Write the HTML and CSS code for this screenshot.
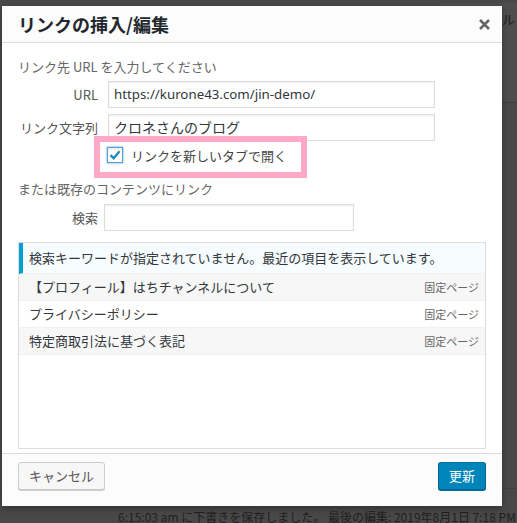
FILE: index.html
```html
<!DOCTYPE html>
<html lang="ja">
<head>
<meta charset="utf-8">
<title>リンクの挿入/編集</title>
<link rel="stylesheet" href="styles.css">
</head>
<body>
<div class="backdrop">
  <div class="side-box"><span class="side-text">キャンセル</span></div>
  <div class="spacer"></div>
  <div class="status-bar">6:15:03 am に下書きを保存しました。 最後の編集: 2019年8月1日 7:18 PM</div>
</div>

<div class="dialog">
  <div class="dialog-header">
    <span class="dialog-title">リンクの挿入/編集</span>
    <span class="close-btn">
      <svg width="11" height="11" viewBox="0 0 11 11"><path d="M1 1 L10 10 M10 1 L1 10" stroke="#666" stroke-width="2.6"/></svg>
    </span>
  </div>

  <div class="dialog-body">
    <p class="howto">リンク先 URL を入力してください</p>
    <div class="field-row">
      <label class="field-label">URL</label>
      <div class="text-input wide url">https://kurone43.com/jin-demo/</div>
    </div>
    <div class="field-row second">
      <label class="field-label">リンク文字列</label>
      <div class="text-input wide">クロネさんのブログ</div>
    </div>
    <div class="check-row">
      <span class="checkbox">
        <svg width="14" height="14" viewBox="0 0 14 14"><path d="M2.5 7.2 L5.6 10.2 L11.6 3.2" fill="none" stroke="#1e8cbe" stroke-width="2.3"/></svg>
      </span>
      <span class="check-label">リンクを新しいタブで開く</span>
    </div>
    <p class="howto existing">または既存のコンテンツにリンク</p>
    <div class="field-row search">
      <label class="field-label">検索</label>
      <div class="text-input narrow"></div>
    </div>

    <div class="results">
      <div class="query-notice">検索キーワードが指定されていません。最近の項目を表示しています。</div>
      <ul class="result-list">
        <li class="alternate"><span class="item-title">【プロフィール】はちチャンネルについて</span><span class="item-info">固定ページ</span></li>
        <li><span class="item-title">プライバシーポリシー</span><span class="item-info">固定ページ</span></li>
        <li class="alternate"><span class="item-title">特定商取引法に基づく表記</span><span class="item-info">固定ページ</span></li>
      </ul>
    </div>
  </div>

  <div class="dialog-footer">
    <span class="button cancel">キャンセル</span>
    <span class="button primary">更新</span>
  </div>

  <div class="highlight"></div>
</div>
</body>
</html>
```

FILE: styles.css
```css
html, body {
  margin: 0;
  padding: 0;
}

body {
  width: 517px;
  height: 523px;
  overflow: hidden;
  background: #484848;
  font-family: "Noto Sans", "Noto Sans CJK JP", sans-serif;
  font-size: 13px;
  position: relative;
}

.backdrop {
  height: 523px;
  display: flex;
  flex-direction: column;
}

.side-box {
  margin: 3px 0 0 440px;
  height: 100px;
  background: #4d4d4d;
  border-bottom: 1px solid #3f3f3f;
  text-align: right;
  padding-right: 2px;
  font-family: "Noto Sans CJK JP", sans-serif;
  color: #1c1c1c;
  line-height: 22px;
  padding-top: 5px;
  box-sizing: border-box;
  overflow: hidden;
  white-space: nowrap;
}

.spacer {
  flex: 1;
}

.status-bar {
  height: 35px;
  border-top: 1px solid #3f3f3f;
  padding: 19px 0 0 118px;
  box-sizing: border-box;
  color: #1f1f1f;
  line-height: 18px;
  font-size: 12px;
  white-space: nowrap;
  overflow: hidden;
  font-family: "Noto Sans CJK JP", sans-serif;
}

.dialog {
  position: absolute;
  left: 2px;
  top: 6px;
  width: 500px;
  height: 500px;
  background: #fff;
  box-shadow: 0 3px 6px rgba(0, 0, 0, 0.3);
  display: flex;
  flex-direction: column;
}

.dialog-header {
  height: 36px;
  line-height: 36px;
  padding: 0 36px 0 16px;
  background: #fcfcfc;
  border-bottom: 1px solid #ddd;
  position: relative;
}

.dialog-title {
  font-family: "Noto Sans CJK JP", sans-serif;
  font-size: 18px;
  font-weight: 700;
  color: #23282d;
}

.close-btn {
  position: absolute;
  right: 12px;
  top: 13px;
  width: 11px;
  height: 11px;
  display: block;
}

.close-btn svg {
  display: block;
}

.dialog-body {
  flex: 1;
  padding: 0 16px;
}

.howto {
  margin: 15px 0 0;
  line-height: 18px;
  color: #666;
  font-family: "Noto Sans CJK JP", sans-serif;
}

.howto.existing {
  margin-top: 16px;
}

.field-row {
  display: flex;
  align-items: center;
  gap: 10px;
  margin-top: 5px;
}

.field-row.second {
  margin-top: 6px;
}

.field-row.search {
  margin-top: 6px;
  gap: 6px;
}

.field-label {
  width: 80px;
  text-align: right;
  color: #555;
  font-family: "Noto Sans CJK JP", sans-serif;
  font-size: 13px;
}

.text-input {
  height: 27px;
  box-sizing: border-box;
  border: 1px solid #ddd;
  box-shadow: inset 0 1px 2px rgba(0, 0, 0, 0.07);
  padding: 0 5px;
  line-height: 25px;
  font-size: 14px;
  color: #32373c;
  background: #fff;
  white-space: nowrap;
  overflow: hidden;
}

.text-input.url {
  font-size: 13.3px;
}

.text-input.wide {
  width: 327px;
}

.text-input.narrow {
  width: 250px;
}

.check-row {
  display: flex;
  align-items: center;
  height: 18px;
  margin: 5px 0 0 89px;
  gap: 8px;
}

.checkbox {
  width: 16px;
  height: 16px;
  box-sizing: border-box;
  border: 1px solid #5b9dd9;
  box-shadow: 0 0 2px rgba(30, 140, 190, 0.8), inset 0 1px 2px rgba(0, 0, 0, 0.1);
  background: #fff;
  display: flex;
  align-items: center;
  justify-content: center;
}

.checkbox svg {
  display: block;
}

.check-label {
  font-family: "Noto Sans CJK JP", sans-serif;
  color: #444;
  font-size: 13px;
}

.results {
  margin-top: 11px;
  height: 207px;
  box-sizing: border-box;
  border: 1px solid #ddd;
  background: #fff;
}

.query-notice {
  border-left: 4px solid #00a0d2;
  background: #f7fcfe;
  padding: 6px;
  line-height: 18px;
  color: #32373c;
  border-bottom: 1px solid #f1f1f1;
  font-family: "Noto Sans CJK JP", sans-serif;
  white-space: nowrap;
}

.result-list {
  list-style: none;
  margin: 0;
  padding: 0;
}

.result-list li {
  display: flex;
  align-items: center;
  justify-content: space-between;
  padding: 4px 6px 4px 10px;
  line-height: 18px;
  border-bottom: 1px solid #f1f1f1;
  color: #32373c;
  font-family: "Noto Sans CJK JP", sans-serif;
}

.result-list li.alternate {
  background: #f7f7f7;
}

.item-info {
  font-size: 11px;
  color: #666;
}

.dialog-footer {
  height: 44px;
  border-top: 1px solid #ddd;
  background: #fcfcfc;
  padding: 8px 16px 0;
  display: flex;
  justify-content: space-between;
  align-items: flex-start;
}

.button {
  height: 28px;
  line-height: 26px;
  padding: 0 10px 1px;
  box-sizing: border-box;
  border-radius: 3px;
  border: 1px solid #ccc;
  font-family: "Noto Sans CJK JP", sans-serif;
  font-size: 13px;
}

.button.cancel {
  background: #f7f7f7;
  color: #555;
  box-shadow: 0 1px 0 #ccc;
}

.button.primary {
  background: #0085ba;
  border-color: #0073aa #006799 #006799;
  color: #fff;
  box-shadow: 0 1px 0 #006799;
}

.highlight {
  position: absolute;
  left: 92px;
  top: 130px;
  width: 213px;
  height: 42px;
  box-sizing: border-box;
  border: 6px solid #ffa8c8;
}
```
